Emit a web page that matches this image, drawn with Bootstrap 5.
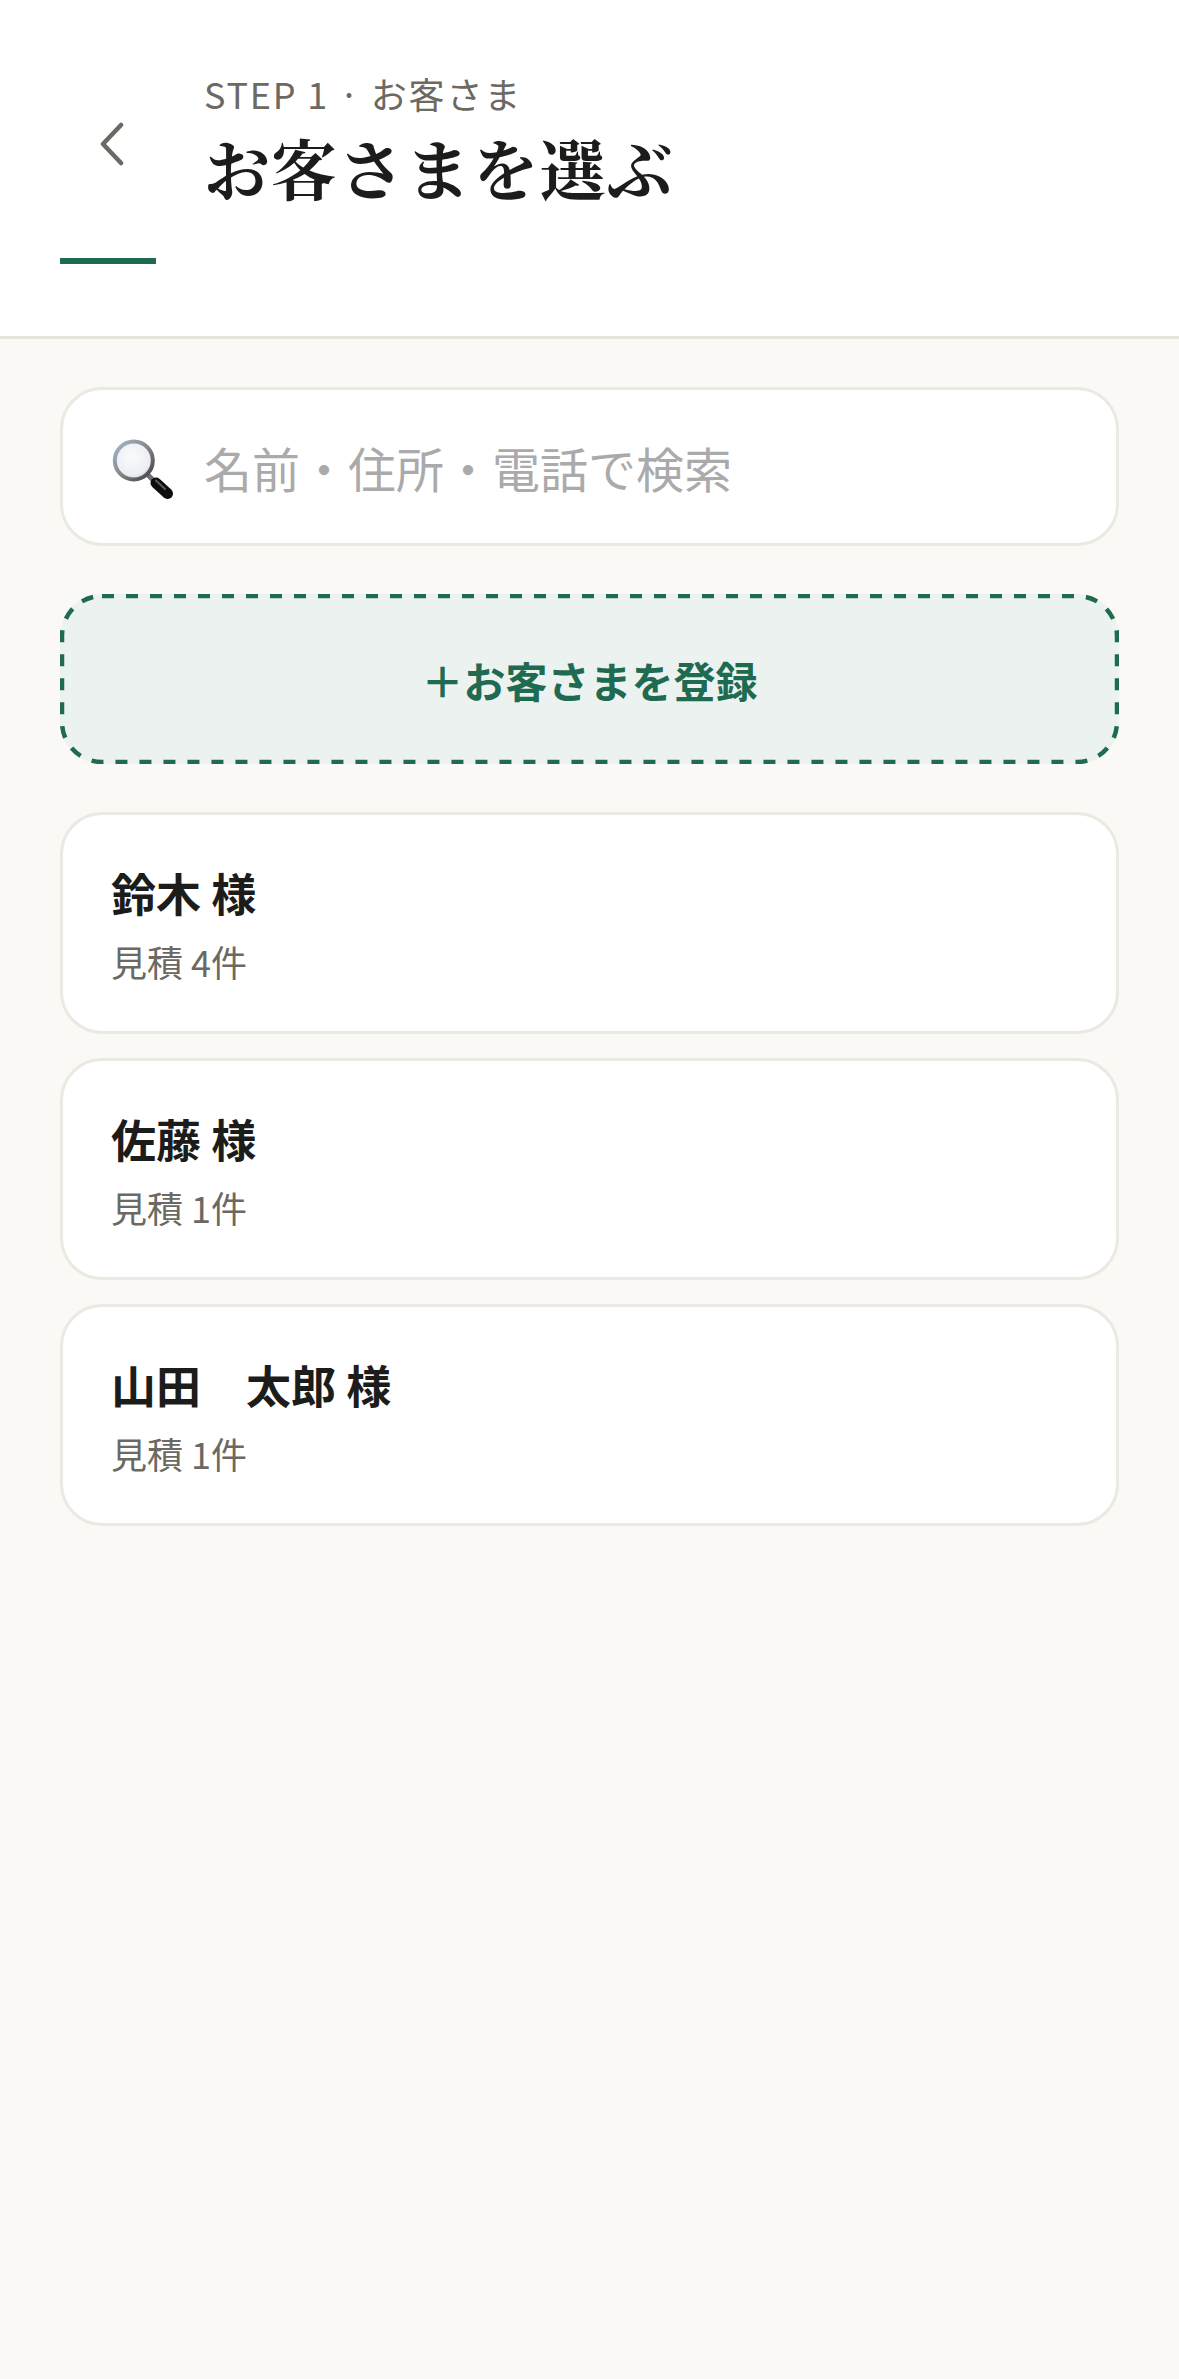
<!DOCTYPE html>
<html lang="ja"><head><meta charset="utf-8"><title>お客さまを選ぶ</title>
<link href="https://cdn.jsdelivr.net/npm/bootstrap@5.3.0/dist/css/bootstrap.min.css" rel="stylesheet">
<style>
html,body{margin:0;background:#fbf9f6;font-family:"Noto Sans CJK JP","Noto Sans",sans-serif;color:#1c1c1a}
.app-head{background:#fff;height:339px;padding:66px 60px 0;border-bottom:3px solid #e8e4dc}
.back-box{width:96px;height:96px;margin-top:30px;padding-left:7px}
.eyebrow{font-size:36px;line-height:54px;letter-spacing:1.8px;color:#6b6962}
.page-title{font-family:"Noto Serif CJK JP","Noto Serif CJK SC","DejaVu Serif",serif;font-size:66px;font-weight:700;line-height:84px;margin:5px 0 0;letter-spacing:1.1px}
.accent-rule{width:96px;height:6px;background:#1f6b52}
.head-main{gap:48px;height:192px}
.content{padding:48px 60px 0}
.search-box{height:159px;background:#fff;border:3px solid #ece8e2;border-radius:42px;padding:0 48px;gap:27px;font-size:48px;color:#aaa}
.add-btn{height:170px;margin-top:48px;background:#ecf2f0;border-radius:42px;color:#1f6b52;font-size:42px;font-weight:700}
.dash-outline{inset:0;width:100%;height:100%}
.cust-list{margin-top:48px;gap:24px}
.cust-item{height:222px;background:#fff;border:3px solid #ece8e2;border-radius:42px;padding:0 48px}
.cust-name{font-size:45px;font-weight:700;line-height:68px}
.cust-meta{font-size:36px;line-height:54px;color:#6b6962;margin-top:7px}
</style></head><body>
<header class="app-head">
 <div class="d-flex head-main">
  <div class="back-box d-flex align-items-center justify-content-center"><svg width="26" height="44" viewBox="0 0 26 44" fill="none" stroke="#6b6962" stroke-width="4.5" stroke-linecap="round" stroke-linejoin="round"><path d="M22 3 4 22 22 41"/></svg></div>
  <div><div class="eyebrow">STEP 1 · お客さま</div><h1 class="page-title">お客さまを選ぶ</h1></div>
 </div>
 <div class="accent-rule"></div>
</header>
<main class="content">
 <div class="search-box d-flex align-items-center">
  <svg width="66" height="66" viewBox="0 0 66 66"><defs><radialGradient id="lens" cx=".45" cy=".4" r=".6"><stop offset="0" stop-color="#fbfbfd"/><stop offset=".8" stop-color="#eceef2"/><stop offset="1" stop-color="#d4d6dc"/></radialGradient><linearGradient id="ring" x1="0" y1="0" x2="1" y2="1"><stop offset="0" stop-color="#a3b9cc"/><stop offset=".5" stop-color="#85878c"/><stop offset="1" stop-color="#3f3f43"/></linearGradient></defs><path d="M35.5 39.5 45 49" stroke="#6f7074" stroke-width="5"/><circle cx="22.8" cy="26.5" r="19" fill="url(#lens)" stroke="url(#ring)" stroke-width="4"/><path d="M45 49 56.5 59.5" stroke="#0e0e10" stroke-width="11" stroke-linecap="round"/><path d="M45 46.5 54 55" stroke="#5a5b60" stroke-width="2" stroke-linecap="round"/></svg>
  <span>名前・住所・電話で検索</span>
 </div>
 <div class="add-btn position-relative d-flex align-items-center justify-content-center">
  <svg class="dash-outline position-absolute" aria-hidden="true"><rect x="2" y="2" width="calc(100% - 4px)" height="calc(100% - 4px)" rx="40" fill="none" stroke="#1f6b52" stroke-width="4.5" stroke-dasharray="12 12"/></svg>
  ＋お客さまを登録
 </div>
 <div class="cust-list d-flex flex-column">
  <div class="cust-item d-flex flex-column justify-content-center"><div class="cust-name">鈴木 様</div><div class="cust-meta">見積 4件</div></div>
  <div class="cust-item d-flex flex-column justify-content-center"><div class="cust-name">佐藤 様</div><div class="cust-meta">見積 1件</div></div>
  <div class="cust-item d-flex flex-column justify-content-center"><div class="cust-name">山田　太郎 様</div><div class="cust-meta">見積 1件</div></div>
 </div>
</main>
<script src="https://cdn.jsdelivr.net/npm/bootstrap@5.3.0/dist/js/bootstrap.bundle.min.js"></script>
</body></html>
